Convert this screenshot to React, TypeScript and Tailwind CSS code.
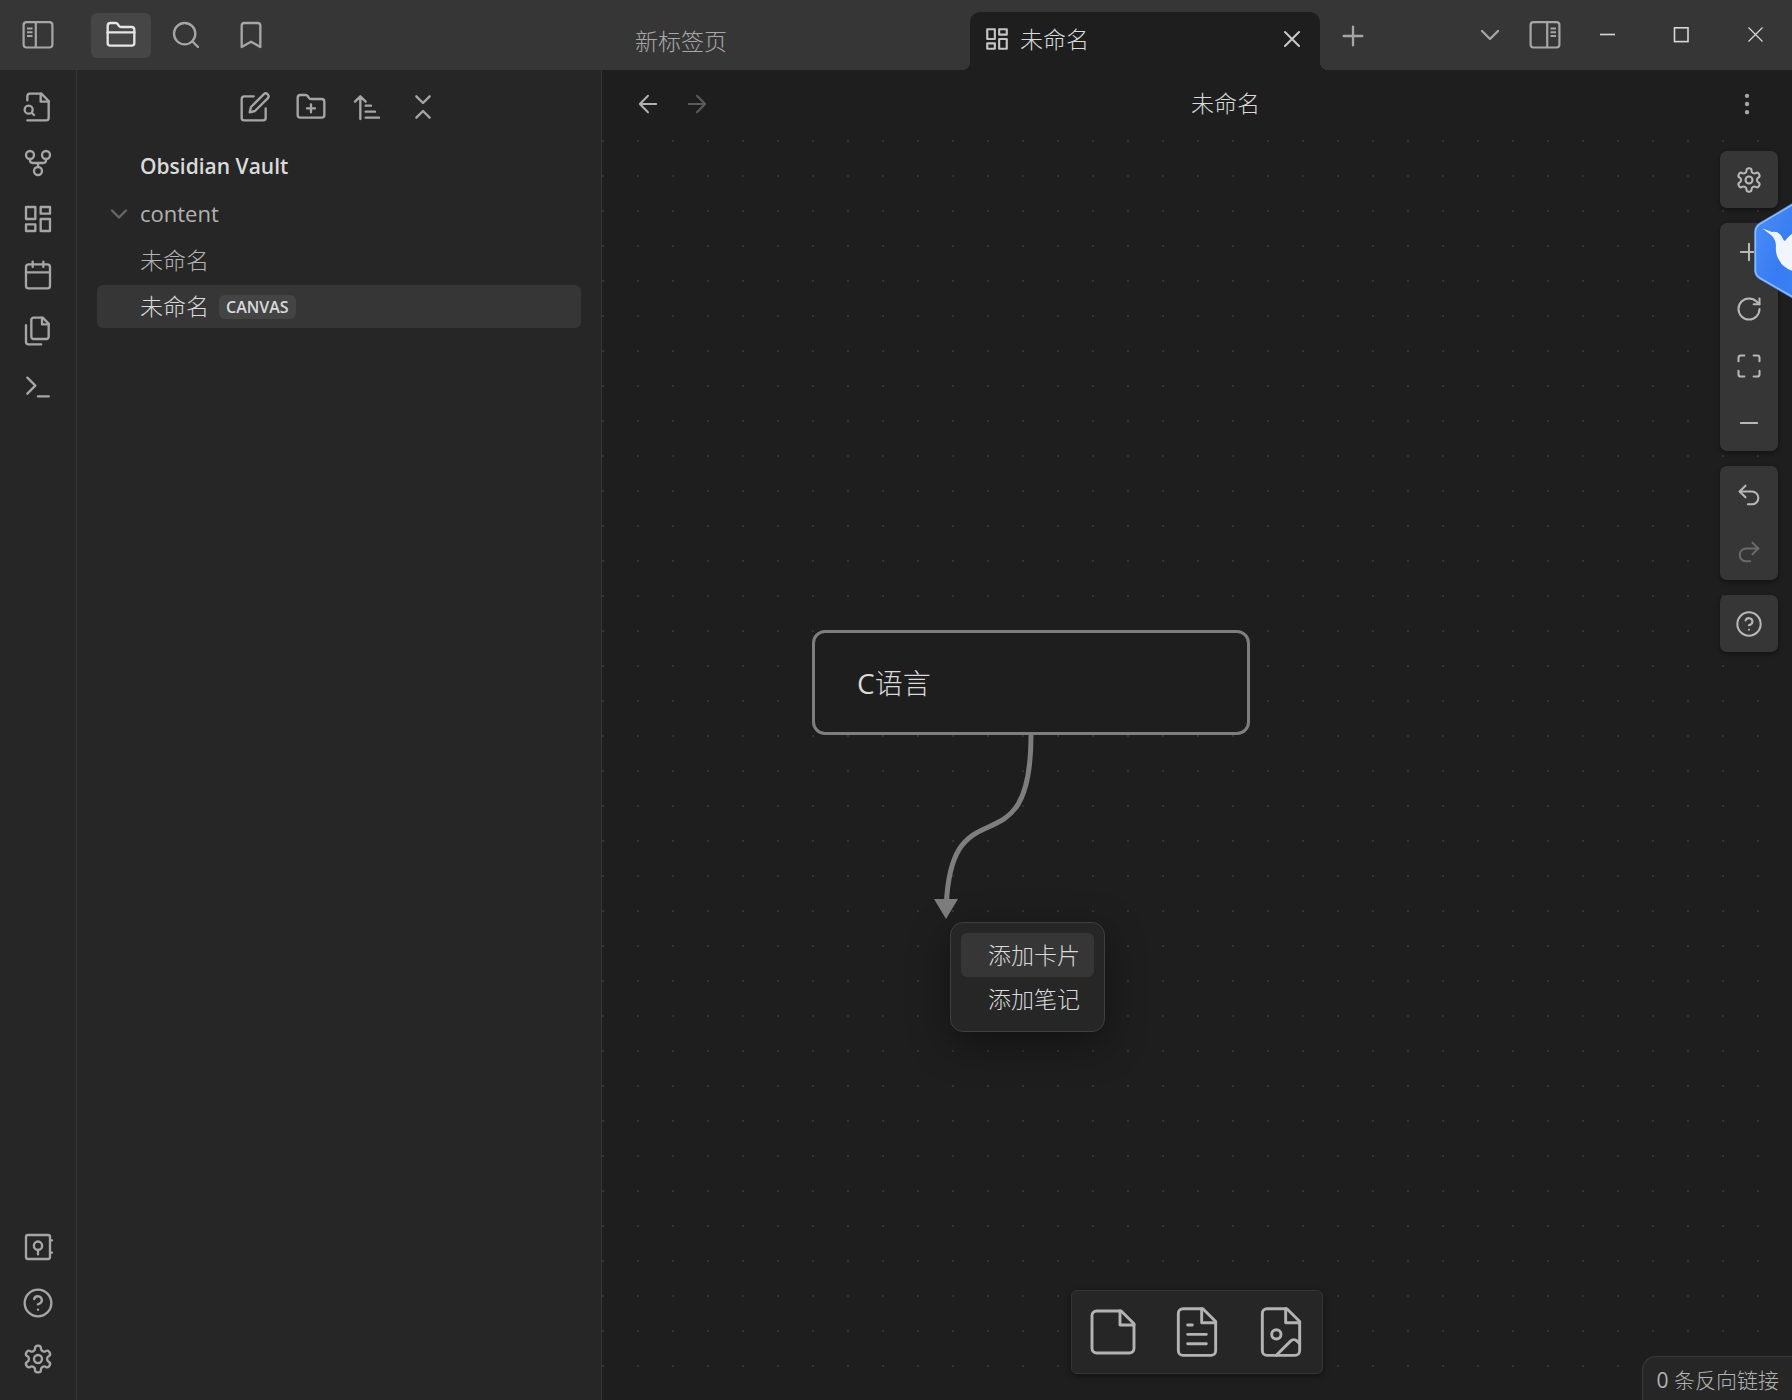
import React from "react";

type IconProps = { size?: string; stroke?: number; className?: string };

function Svg({ size = "size-8", stroke = 1.75, className = "", children }: IconProps & { children: React.ReactNode }) {
  return (
    <svg
      viewBox="0 0 24 24"
      fill="none"
      stroke="currentColor"
      strokeWidth={stroke}
      strokeLinecap="round"
      strokeLinejoin="round"
      aria-hidden="true"
      className={`${size} shrink-0 ${className}`}
    >
      {children}
    </svg>
  );
}

const FOLDER =
  "M4 20h16a2 2 0 0 0 2-2V8a2 2 0 0 0-2-2h-7.93a2 2 0 0 1-1.66-.9l-.82-1.2A2 2 0 0 0 7.93 3H4a2 2 0 0 0-2 2v13c0 1.1.9 2 2 2Z";
const PAGE = "M14.5 2H6a2 2 0 0 0-2 2v16a2 2 0 0 0 2 2h12a2 2 0 0 0 2-2V7.5L14.5 2z";

const FolderIcon = (p: IconProps) => <Svg {...p}><path d={FOLDER} /><path d="M2 10h20" /></Svg>;
const SearchIcon = (p: IconProps) => <Svg {...p}><circle cx="11" cy="11" r="8" /><path d="m21 21-4.3-4.3" /></Svg>;
const BookmarkIcon = (p: IconProps) => <Svg {...p}><path d="m19 21-7-4-7 4V5a2 2 0 0 1 2-2h10a2 2 0 0 1 2 2v16z" /></Svg>;
const FileSearchIcon = (p: IconProps) => (
  <Svg {...p}>
    <path d="M4 22h14a2 2 0 0 0 2-2V7.5L14.5 2H6a2 2 0 0 0-2 2v3" />
    <path d="M14 2v6h6" />
    <circle cx="5" cy="14" r="3" />
    <path d="m9 18-1.5-1.5" />
  </Svg>
);
const ForkIcon = (p: IconProps) => (
  <Svg {...p}>
    <circle cx="12" cy="18" r="3" /><circle cx="6" cy="6" r="3" /><circle cx="18" cy="6" r="3" />
    <path d="M18 9v1a2 2 0 0 1-2 2H8a2 2 0 0 1-2-2V9" /><path d="M12 12v3" />
  </Svg>
);
const DashboardIcon = (p: IconProps) => (
  <Svg {...p}>
    <rect x="3" y="3" width="7" height="9" /><rect x="14" y="3" width="7" height="5" />
    <rect x="14" y="12" width="7" height="9" /><rect x="3" y="16" width="7" height="5" />
  </Svg>
);
const CalendarIcon = (p: IconProps) => (
  <Svg {...p}><rect x="3" y="4" width="18" height="18" rx="2" /><path d="M16 2v4M8 2v4M3 10h18" /></Svg>
);
const FilesIcon = (p: IconProps) => (
  <Svg {...p}>
    <path d="M15.5 2H8.6c-.4 0-.8.2-1.1.5-.3.3-.5.7-.5 1.1v12.8c0 .4.2.8.5 1.1.3.3.7.5 1.1.5h9.8c.4 0 .8-.2 1.1-.5.3-.3.5-.7.5-1.1V6.5L15.5 2z" />
    <path d="M3 7.6v12.8c0 .4.2.8.5 1.1.3.3.7.5 1.1.5h9.8" /><path d="M15 2v5h5" />
  </Svg>
);
const TerminalIcon = (p: IconProps) => <Svg {...p}><path d="m4 17 6-6-6-6" /><path d="M12 19h8" /></Svg>;
const VaultIcon = (p: IconProps) => (
  <Svg {...p}>
    <rect x="3" y="3" width="18" height="18" rx="1.5" /><circle cx="12" cy="11" r="3.1" />
    <path d="M12 14.2V17.5M21 7h1.5M21 16.2h1.5" />
  </Svg>
);
const HelpIcon = (p: IconProps) => (
  <Svg {...p}><circle cx="12" cy="12" r="10" /><path d="M9.09 9a3 3 0 0 1 5.83 1c0 2-3 3-3 3" /><path d="M12 17h.01" /></Svg>
);
const SettingsIcon = (p: IconProps) => (
  <Svg {...p}>
    <path d="M12.22 2h-.44a2 2 0 0 0-2 2v.18a2 2 0 0 1-1 1.73l-.43.25a2 2 0 0 1-2 0l-.15-.08a2 2 0 0 0-2.73.73l-.22.38a2 2 0 0 0 .73 2.73l.15.1a2 2 0 0 1 1 1.72v.51a2 2 0 0 1-1 1.74l-.15.09a2 2 0 0 0-.73 2.73l.22.38a2 2 0 0 0 2.73.73l.15-.08a2 2 0 0 1 2 0l.43.25a2 2 0 0 1 1 1.73V20a2 2 0 0 0 2 2h.44a2 2 0 0 0 2-2v-.18a2 2 0 0 1 1-1.73l.43-.25a2 2 0 0 1 2 0l.15.08a2 2 0 0 0 2.73-.73l.22-.39a2 2 0 0 0-.73-2.73l-.15-.08a2 2 0 0 1-1-1.74v-.5a2 2 0 0 1 1-1.74l.15-.09a2 2 0 0 0 .73-2.73l-.22-.38a2 2 0 0 0-2.73-.73l-.15.08a2 2 0 0 1-2 0l-.43-.25a2 2 0 0 1-1-1.73V4a2 2 0 0 0-2-2z" />
    <circle cx="12" cy="12" r="3" />
  </Svg>
);
const EditIcon = (p: IconProps) => (
  <Svg {...p}>
    <path d="M11 4H4a2 2 0 0 0-2 2v14a2 2 0 0 0 2 2h14a2 2 0 0 0 2-2v-7" />
    <path d="M18.5 2.5a2.121 2.121 0 0 1 3 3L12 15l-4 1 1-4 9.5-9.5z" />
  </Svg>
);
const FolderPlusIcon = (p: IconProps) => <Svg {...p}><path d={FOLDER} /><path d="M12 10v6M9 13h6" /></Svg>;
const SortIcon = (p: IconProps) => <Svg {...p}><path d="m3 8 4-4 4 4M7 4v17M11 11h4M11 15.500h7M11 20h10" /></Svg>;
const CollapseIcon = (p: IconProps) => <Svg {...p}><path d="m7 20 5-5 5 5M7 4l5 5 5-5" /></Svg>;
const ChevronIcon = (p: IconProps) => <Svg {...p}><path d="m6 9 6 6 6-6" /></Svg>;
const PlusIcon = (p: IconProps) => <Svg {...p}><path d="M12 5v14M5 12h14" /></Svg>;
const MinusIcon = (p: IconProps) => <Svg {...p}><path d="M5 12h14" /></Svg>;
const CloseIcon = (p: IconProps) => <Svg {...p}><path d="M18 6 6 18M6 6l12 12" /></Svg>;
const BackIcon = (p: IconProps) => <Svg {...p}><path d="M19 12H5M12 19l-7-7 7-7" /></Svg>;
const ForwardIcon = (p: IconProps) => <Svg {...p}><path d="M5 12h14M12 5l7 7-7 7" /></Svg>;
const MoreIcon = (p: IconProps) => (
  <Svg {...p}><circle cx="12" cy="12" r="1" /><circle cx="12" cy="5" r="1" /><circle cx="12" cy="19" r="1" /></Svg>
);
const RotateIcon = (p: IconProps) => <Svg {...p}><path d="M21 12a9 9 0 1 1-9-9c2.52 0 4.93 1 6.74 2.74L21 8" /><path d="M21 3v5h-5" /></Svg>;
const FitIcon = (p: IconProps) => (
  <Svg {...p}>
    <path d="M8 3H5a2 2 0 0 0-2 2v3M21 8V5a2 2 0 0 0-2-2h-3M3 16v3a2 2 0 0 0 2 2h3M16 21h3a2 2 0 0 0 2-2v-3" />
  </Svg>
);
const UndoIcon = (p: IconProps) => <Svg {...p}><path d="M9 14 4 9l5-5" /><path d="M4 9h10.5a5.5 5.5 0 0 1 0 11H11" /></Svg>;
const RedoIcon = (p: IconProps) => <Svg {...p}><path d="m15 14 5-5-5-5" /><path d="M20 9H9.5a5.5 5.5 0 0 0 0 11H13" /></Svg>;
const CardIcon = (p: IconProps) => (
  <Svg {...p}><path d="M15.5 3H5a2 2 0 0 0-2 2v14c0 1.1.9 2 2 2h14a2 2 0 0 0 2-2V8.5L15.5 3Z" /><path d="M15 3v6h6" /></Svg>
);
const NoteIcon = (p: IconProps) => <Svg {...p}><path d={PAGE} /><path d="M14 2v6h6M16 13H8M16 17H8M10 9H8" /></Svg>;
const MediaIcon = (p: IconProps) => (
  <Svg {...p}>
    <path d={PAGE} /><path d="M14 2v6h6" /><circle cx="10" cy="13" r="2" />
    <path d="m20 17-1.09-1.09a2 2 0 0 0-2.82 0L10 22" />
  </Svg>
);

function SidebarToggleIcon({ flipped = false }: { flipped?: boolean }) {
  return (
    <svg viewBox="0 0 32 28" fill="none" stroke="currentColor" strokeWidth="2.2" aria-hidden="true" className={flipped ? "h-7 w-8 -scale-x-100" : "h-7 w-8"}>
      <rect x="1.6" y="1.1" width="28.8" height="25.4" rx="3" />
      <path d="M13.8 2v24.5" />
      <path d="M5 7.500h5.5M5 11.300h5.5M5 15.100h5.5" strokeWidth="2" />
    </svg>
  );
}

function BirdBadge() {
  return (
    <svg viewBox="0 0 40 98" aria-hidden="true" className="h-[98px] w-10">
      <defs>
        <linearGradient id="hex" x1="0" y1="0" x2="1" y2="1">
          <stop offset="0" stopColor="#4c90f8" />
          <stop offset="0.6" stopColor="#377cf2" />
          <stop offset="1" stopColor="#3b82f6" />
        </linearGradient>
      </defs>
      <path d="M46-.5 8 22Q3.500 25 3.500 30V69Q3.500 73 8 76L46 98Z" fill="url(#hex)" stroke="#3f7fe6" strokeWidth="3" />
      <path d="M46-.5 8 22Q3.500 25 3.500 30V69Q3.500 73 8 76L46 98" fill="none" stroke="#8dbaff" strokeWidth="1.6" />
      <path d="M10.500 26.500 20 30Q27 29 30 35Q31 38 33 39Q35 36 41 31V69Q31 66 27 58Q23 52 24 43Q23 36 19 33Z" fill="#f0f5ff" />
    </svg>
  );
}

function IconButton({ label, className, children, disabled }: { label: string; className: string; children: React.ReactNode; disabled?: boolean }) {
  return (
    <button type="button" aria-label={label} disabled={disabled} className={`flex shrink-0 items-center justify-center ${className}`}>
      {children}
    </button>
  );
}

function TitleBar() {
  return (
    <header className="flex h-[70px] shrink-0 bg-[#363636] text-[#a6a6a6]">
      <div className="flex w-[620px] shrink-0 items-center">
        <IconButton label="折叠侧边栏" className="h-full w-[76px]"><SidebarToggleIcon /></IconButton>
        <div className="ml-[15px] flex gap-[5px]">
          <IconButton label="文件" className="h-[45px] w-[60px] rounded-md bg-[#464646] text-[#e6e6e6]"><FolderIcon /></IconButton>
          <IconButton label="搜索" className="h-[45px] w-[60px]"><SearchIcon /></IconButton>
          <IconButton label="书签" className="h-[45px] w-[60px]"><BookmarkIcon /></IconButton>
        </div>
      </div>
      <div role="tablist" className="flex min-w-0 flex-1 pt-3 text-[23px]">
        <div className="flex max-w-[350px] flex-1 items-center px-[15px]">
          <button type="button" role="tab" aria-selected="false" className="text-left text-[#a8a8a8]">新标签页</button>
        </div>
        <div className="relative flex max-w-[350px] flex-1 items-center justify-between rounded-t-[10px] bg-[#1e1e1e] px-[14px] pb-1">
          <span className="absolute bottom-0 -left-2 size-2 bg-[radial-gradient(circle_at_0_0,#363636_8px,#1e1e1e_8px)]" />
          <span className="absolute -right-2 bottom-0 size-2 bg-[radial-gradient(circle_at_100%_0,#363636_8px,#1e1e1e_8px)]" />
          <button type="button" role="tab" aria-selected="true" className="flex items-center gap-[10px] text-[#dadada]">
            <DashboardIcon size="size-[26px]" stroke={2} className="text-[#c4c4c4]" />
            未命名
          </button>
          <IconButton label="关闭标签页" className="size-7 text-[#c8c8c8]"><CloseIcon size="size-7" /></IconButton>
        </div>
        <IconButton label="新建标签页" className="-mt-3 ml-[11px] h-[72px] w-11"><PlusIcon /></IconButton>
      </div>
      <IconButton label="标签页列表" className="w-[60px]"><ChevronIcon /></IconButton>
      <IconButton label="展开右侧边栏" className="w-[50px]"><SidebarToggleIcon flipped /></IconButton>
      <div className="flex text-[#d8d8d8]">
        <IconButton label="最小化" className="w-[74px]">
          <svg viewBox="0 0 16 16" aria-hidden="true" className="size-4"><path d="M1 7.500h15" stroke="currentColor" strokeWidth="1.6" /></svg>
        </IconButton>
        <IconButton label="最大化" className="w-[74px]">
          <svg viewBox="0 0 16 16" aria-hidden="true" className="size-4"><rect x="1.5" y="0.800" width="13.5" height="13.8" fill="none" stroke="currentColor" strokeWidth="1.6" /></svg>
        </IconButton>
        <IconButton label="关闭" className="w-[74px]">
          <svg viewBox="0 0 16 16" aria-hidden="true" className="size-4"><path d="m1.500.5 14 14M15.500.5l-14 14" stroke="currentColor" strokeWidth="1.2" /></svg>
        </IconButton>
      </div>
    </header>
  );
}

function Ribbon() {
  const cell = "h-14 w-full";
  return (
    <nav aria-label="功能区" className="flex w-[77px] shrink-0 flex-col border-r border-[#363636] pt-[9px] pb-[13px] text-[#a6a6a6]">
      <IconButton label="快速切换" className={cell}><FileSearchIcon /></IconButton>
      <IconButton label="关系图谱" className={cell}><ForkIcon /></IconButton>
      <IconButton label="新建白板" className={cell}><DashboardIcon /></IconButton>
      <IconButton label="今日日记" className={cell}><CalendarIcon /></IconButton>
      <IconButton label="插入模板" className={cell}><FilesIcon /></IconButton>
      <IconButton label="命令面板" className={cell}><TerminalIcon /></IconButton>
      <div className="flex-1" />
      <IconButton label="打开其他仓库" className={cell}><VaultIcon /></IconButton>
      <IconButton label="帮助" className={cell}><HelpIcon /></IconButton>
      <IconButton label="设置" className={cell}><SettingsIcon /></IconButton>
    </nav>
  );
}

function Sidebar() {
  return (
    <aside className="flex w-[525px] shrink-0 flex-col border-r border-[#363636] px-5 pt-[9px] text-[#b3b3b3]">
      <div className="mb-2 flex justify-center text-[#a6a6a6]">
        <IconButton label="新建笔记" className="size-14"><EditIcon /></IconButton>
        <IconButton label="新建文件夹" className="size-14"><FolderPlusIcon /></IconButton>
        <IconButton label="排序" className="size-14"><SortIcon /></IconButton>
        <IconButton label="全部折叠" className="size-14"><CollapseIcon /></IconButton>
      </div>
      <h2 className="flex h-[47px] items-center pl-[43px] text-[21px] font-semibold text-[#dadada]">Obsidian Vault</h2>
      <button type="button" aria-expanded="true" className="flex h-[47px] items-center gap-[7px] pl-2 text-[22px] font-normal">
        <ChevronIcon size="size-7" stroke={2} className="text-[#666666]" />
        content
      </button>
      <button type="button" className="flex h-[47px] items-center pl-[43px] text-[23px]">未命名</button>
      <button type="button" className="mt-px flex h-[43px] items-center gap-[10px] rounded-md bg-[#363636] pl-[43px] text-[23px] text-[#dadada]">
        未命名
        <span className="flex h-6 items-center rounded-md bg-[#444444] px-[7px] text-[16px] font-semibold">CANVAS</span>
      </button>
    </aside>
  );
}

function CanvasControls() {
  const group = "flex w-[58px] flex-col rounded-[7px] bg-[#363636] shadow-[0_2px_5px_rgba(0,0,0,0.4)]";
  const cell = "h-[57px] w-full";
  return (
    <div className="absolute top-[13px] right-[14px] flex flex-col gap-[15px] text-[#b8b8b8]">
      <div className={group}>
        <IconButton label="白板设置" className={cell}><SettingsIcon size="size-7" /></IconButton>
      </div>
      <div className={group}>
        <IconButton label="放大" className={cell}><PlusIcon size="size-7" /></IconButton>
        <IconButton label="重置缩放" className={cell}><RotateIcon size="size-7" /></IconButton>
        <IconButton label="缩放以适应" className={cell}><FitIcon size="size-7" /></IconButton>
        <IconButton label="缩小" className={cell}><MinusIcon size="size-7" /></IconButton>
      </div>
      <div className={group}>
        <IconButton label="撤销" className={cell}><UndoIcon size="size-7" /></IconButton>
        <IconButton label="重做" disabled className="h-[57px] w-full text-[#6a6a6a]"><RedoIcon size="size-7" /></IconButton>
      </div>
      <div className={group}>
        <IconButton label="白板帮助" className={cell}><HelpIcon size="size-7" /></IconButton>
      </div>
    </div>
  );
}

function Canvas() {
  return (
    <div className="relative flex-1 overflow-hidden bg-[radial-gradient(circle_at_1px_1px,#343434_1px,transparent_1.5px)] bg-[size:35px_35px] bg-[position:0px_2px]">
      <div className="absolute top-[492px] left-[210px] flex h-[105px] w-[438px] items-center rounded-[13px] border-3 border-[#7e7e7e] bg-[#1e1e1e] px-[42px] text-[28px] text-[#dadada]">
        <p><span className="font-normal">C</span>语言</p>
      </div>
      <svg viewBox="0 0 120 190" aria-hidden="true" className="absolute top-[597px] left-[320px] h-[190px] w-[120px]">
        <clipPath id="edge-body"><path d="M0 0h120v170H0z" /></clipPath>
        <path d="M109 0C109 146 24 38 24 184" fill="none" stroke="#7e7e7e" strokeWidth="5" clipPath="url(#edge-body)" />
        <path d="M12 164h24L24 184Z" fill="#7e7e7e" />
      </svg>
      <div role="menu" className="absolute top-[784px] left-[348px] flex flex-col rounded-[13px] border border-[#3f3f3f] bg-[#262626] p-[10px] text-[23px] text-[#dadada] shadow-[0_12px_40px_rgba(0,0,0,0.4)]">
        <button type="button" role="menuitem" className="h-11 rounded-md bg-[#363636] pr-[14px] pl-[27px]">添加卡片</button>
        <button type="button" role="menuitem" className="h-11 rounded-md pr-[14px] pl-[27px]">添加笔记</button>
      </div>
      <CanvasControls />
      <div className="absolute bottom-[26px] left-1/2 flex h-[84px] w-[252px] -translate-x-1/2 justify-center rounded-md border border-[#363636] bg-[#262626] text-[#b3b3b3] shadow-[0_2px_6px_rgba(0,0,0,0.4)]">
        <IconButton label="添加卡片" className="w-[84px]"><CardIcon size="size-14" stroke={1.25} /></IconButton>
        <IconButton label="从仓库添加笔记" className="w-[84px]"><NoteIcon size="size-14" stroke={1.25} /></IconButton>
        <IconButton label="从仓库添加媒体" className="w-[84px]"><MediaIcon size="size-14" stroke={1.25} /></IconButton>
      </div>
      <div className="absolute right-0 bottom-0 flex h-11 items-center rounded-tl-[14px] border-t border-l border-[#3a3a3a] bg-[#262626] pt-1 pr-[13px] pl-[14px] text-[21px] text-[#b3b3b3]">
        <p><span className="font-normal">0</span> 条反向链接</p>
      </div>
    </div>
  );
}

export default function App() {
  return (
    <div className="relative flex h-screen min-h-[900px] flex-col overflow-hidden bg-[#262626] font-['Open_Sans','Noto_Sans_CJK_SC',sans-serif] font-light" lang="zh-CN">
      <TitleBar />
      <div className="flex min-h-0 flex-1">
        <Ribbon />
        <Sidebar />
        <main className="flex min-w-0 flex-1 flex-col bg-[#1e1e1e]">
          <div className="flex h-[68px] shrink-0 items-center pr-[21px] pb-px pl-[21px] text-[#b0b0b0]">
            <IconButton label="后退" className="size-[49px]"><BackIcon size="size-7" /></IconButton>
            <IconButton label="前进" disabled className="size-[49px] text-[#5c5c5c]"><ForwardIcon size="size-7" /></IconButton>
            <h1 className="flex-1 pl-2 text-center text-[23px] text-[#dadada]">未命名</h1>
            <IconButton label="更多选项" className="size-[49px] text-[#a6a6a6]"><MoreIcon size="size-7" /></IconButton>
          </div>
          <Canvas />
        </main>
      </div>
      <button type="button" aria-label="悬浮助手" className="absolute top-[202px] right-0"><BirdBadge /></button>
    </div>
  );
}
